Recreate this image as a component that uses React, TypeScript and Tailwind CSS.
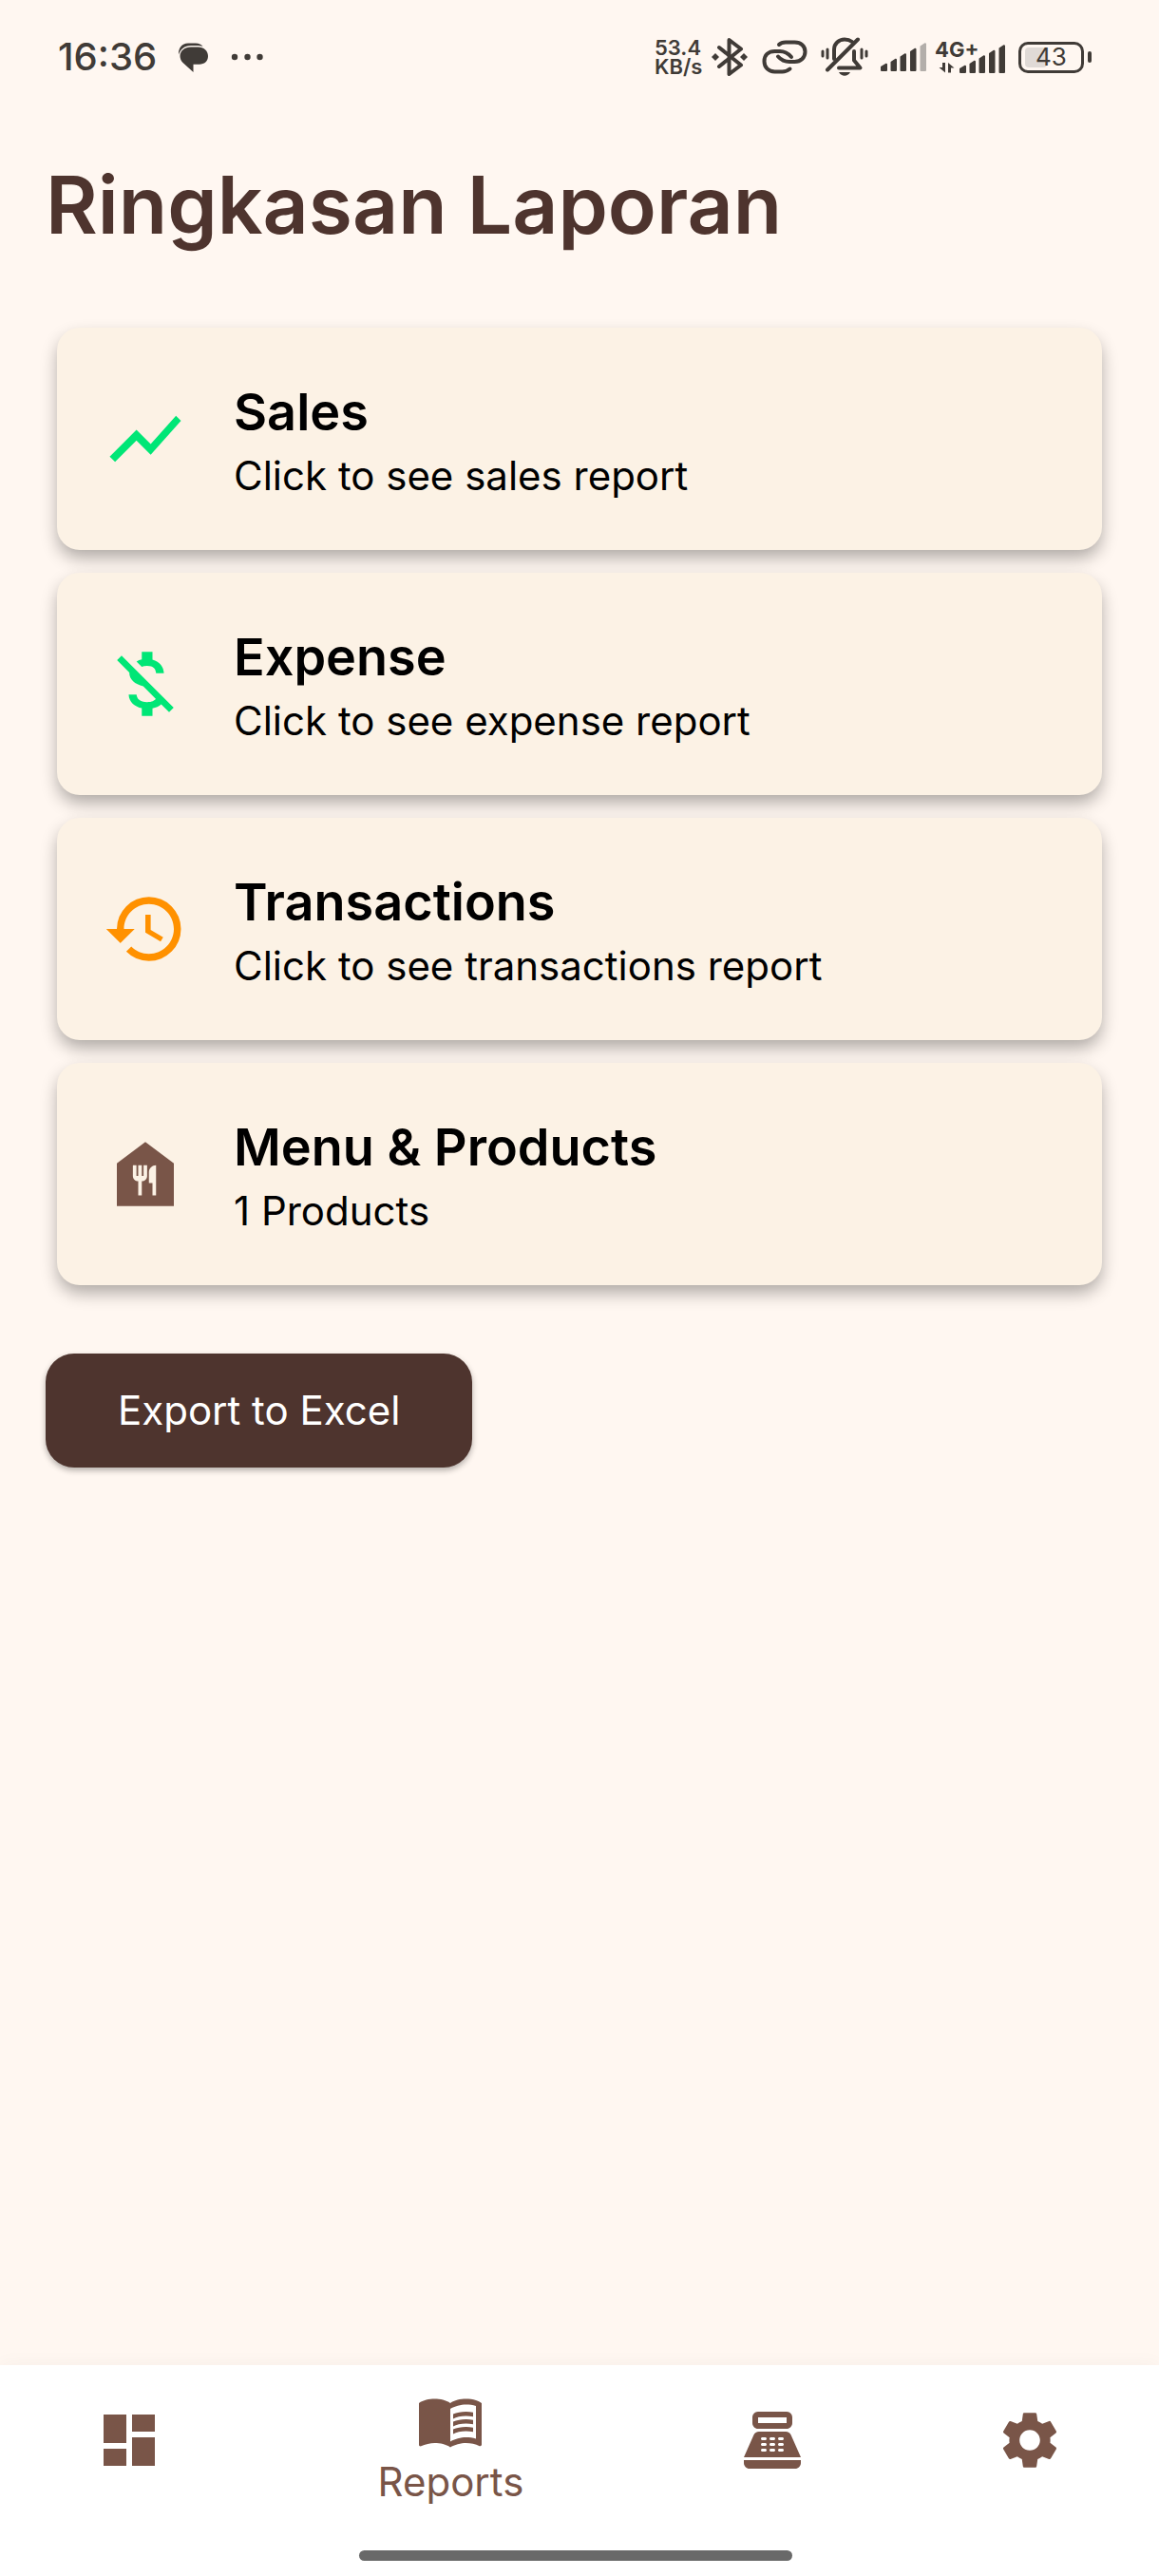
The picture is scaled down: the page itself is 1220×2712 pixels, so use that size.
import type { ReactNode } from 'react';
import {
  MdShowChart,
  MdMoneyOff,
  MdHistory,
  MdFoodBank,
  MdDashboard,
  MdMenuBook,
  MdPointOfSale,
  MdSettings,
} from 'react-icons/md';

const INK = '#403b37';

function SignalBars({ dimLast }: { dimLast?: boolean }) {
  return (
    <g fill={INK} stroke={INK} strokeWidth="2" strokeLinejoin="round">
      <path d="M1 29v-3.500l5-2.800V29z" />
      <path d="M11.500 29V20.500l4.500-2.800V29z" />
      <path d="M21.500 29V15l4.500-2.800V29z" />
      <path d="M32 29V9.500l4.500-2.800V29z" />
      <path
        d="M42.500 29V4l4.500-2.800V29z"
        fill={dimLast ? '#b3aeaa' : INK}
        stroke={dimLast ? '#b3aeaa' : INK}
      />
    </g>
  );
}

function StatusBar() {
  return (
    <header className="flex h-[120px] items-center justify-between pl-[61px] pr-[71px] text-[#403b37]">
      <div className="flex items-center">
        <time className="w-[104px] text-[40px] leading-[48px] font-medium">16:36</time>
        <svg className="ml-[22px]" width="33" height="33" viewBox="0 0 33 33" fill={INK} aria-label="Message">
          <path d="M1 13.500C.500 7 4.500 1.500 11 1.500h8c3.500 0 6 1.500 7.500 3.500-2-.800-4-1-6.500-1h-6C7 4 3 8 1 13.500z" />
          <path d="M14 5.500h7.500c6 0 10.500 4 10.500 9.500s-4 8.700-9 8.700h-6.500V32L5.500 22C3.500 20 2.500 17.500 2.500 15c0-5.500 5-9.500 11.500-9.500z" />
        </svg>
        <svg className="ml-[22px]" width="36" height="8" viewBox="0 0 36 8" fill={INK} aria-label="More">
          <circle cx="5" cy="4" r="3.200" />
          <circle cx="18.500" cy="4" r="3.200" />
          <circle cx="31.500" cy="4" r="3.200" />
        </svg>
      </div>
      <div className="flex items-center">
        <p className="w-[50px] text-[22px] leading-[20px] font-semibold">
          53.4
          <br />
          KB/s
        </p>
        <svg className="ml-[9px]" width="40" height="42" viewBox="0 0 40 42" fill="none" stroke={INK} strokeWidth="4" strokeLinejoin="round" strokeLinecap="round" aria-label="Bluetooth">
          <path d="M9 11l23 18.500-12.500 9.500V3L32 12.500 9 31" />
          <path d="M5 17l4 4-4 4-4-4zM35 17l4 4-4 4-4-4z" fill={INK} stroke="none" />
        </svg>
        <svg className="ml-[14px]" width="48" height="36" viewBox="0 0 48 36" fill="none" stroke={INK} strokeWidth="4" strokeLinecap="round" aria-label="Link">
          <path d="M18 5C20 3 22 2.500 25 2.500h9.500c6.500 0 11 4 11 10S41 23 34.500 23H29c-5 0-8.500-1.500-12-5.500" />
          <path d="M29.500 30.500c-2.500 2-4.500 3-8 3H13.500c-6.500 0-11-4.500-11-11s4.500-10.500 11-10.500H19c5 0 8.500 2 12 6" />
        </svg>
        <svg className="ml-[14px]" width="50" height="42" viewBox="0 0 50 42" fill="none" stroke={INK} strokeWidth="4" strokeLinecap="round" strokeLinejoin="round" aria-label="Silent">
          <path d="M14 23V13c0-6 5-10.500 11-10.500 3.500 0 6 1 8 2.500" />
          <path d="M7 34.500L39 2.500" />
          <path d="M35 15v9.500l6.500 8H19" />
          <path d="M19 37h12c-1.500 2.500-3.500 3.800-6 3.800s-4.500-1.300-6-3.800z" fill={INK} stroke="none" />
          <path d="M2 15v5M7 13v9M43 13v9M48 15v5" strokeWidth="3" />
        </svg>
        <svg className="ml-[13px]" width="49" height="30" viewBox="0 0 49 30" aria-label="Signal">
          <SignalBars dimLast />
        </svg>
        <div className="relative ml-2 h-[34px] w-[75px]">
          <svg className="absolute right-0 bottom-0" width="71" height="30" viewBox="0 0 71 30" aria-label="Mobile data signal">
            <path d="M7 19v10.500L.500 24H4v-5zM10 29.500V19l6.500 5.500H13v5z" fill={INK} />
            <g transform="translate(22 0)">
              <SignalBars />
            </g>
          </svg>
          <span className="absolute top-0 left-0 text-[22px] leading-[18px] font-bold">4G+</span>
        </div>
        <div className="ml-[13px] flex items-center gap-1" role="img" aria-label="Battery 43 percent">
          <div className="relative flex h-[33px] w-[69px] items-center justify-center rounded-[10px] border-[3px] border-[#403b37] text-[26px] leading-[28px]">
            <span className="absolute top-[3px] left-[4px] h-[21px] w-[23px] rounded-[4px] bg-[#e0dad6]" />
            <span className="relative">43</span>
          </div>
          <span className="h-[12px] w-[4px] rounded-sm bg-[#403b37]" />
        </div>
      </div>
    </header>
  );
}

function ReportCard({ icon, title, text }: { icon: ReactNode; title: string; text: string }) {
  return (
    <button
      type="button"
      className="flex w-full items-center gap-12 rounded-[24px] bg-[#fcf2e5] px-12 py-[50px] text-left shadow-[0_9px_18px_-1px_rgba(0,0,0,0.32)]"
    >
      {icon}
      <span className="flex flex-col text-black">
        <span className="text-[54px] leading-[78px] font-semibold">{title}</span>
        <span className="text-[42px] leading-[56px]">{text}</span>
      </span>
    </button>
  );
}

export default function App() {
  return (
    <div className="flex min-h-screen flex-col bg-[#fff7f1] font-['Inter','Noto_Sans',sans-serif]">
      <StatusBar />
      <main className="flex flex-1 flex-col items-start px-12 pt-[39px]">
        <h1 className="text-[84px] leading-[114px] font-semibold text-[#4e342e]">Ringkasan Laporan</h1>
        <section className="mt-[60px] flex w-full flex-col gap-6 p-3">
          <ReportCard icon={<MdShowChart size={90} color="#00e676" />} title="Sales" text="Click to see sales report" />
          <ReportCard icon={<MdMoneyOff size={90} color="#00e676" />} title="Expense" text="Click to see expense report" />
          <ReportCard icon={<MdHistory size={90} color="#ff9100" />} title="Transactions" text="Click to see transactions report" />
          <ReportCard icon={<MdFoodBank size={90} color="#795548" />} title="Menu & Products" text="1 Products" />
        </section>
        <button
          type="button"
          className="mt-[60px] h-[120px] rounded-[30px] bg-[#4e342e] px-[76px] text-[42px] leading-[60px] text-white shadow-[0_3px_6px_rgba(0,0,0,0.3)]"
        >
          Export to Excel
        </button>
      </main>
      <footer className="bg-white text-[#795548] shadow-[0_0_20px_rgba(0,0,0,0.04)]">
        <nav className="flex h-[158px] items-center">
          <button type="button" aria-label="Dashboard" className="flex flex-[2] justify-center">
            <MdDashboard size={72} />
          </button>
          <button type="button" aria-current="page" className="flex flex-[3] flex-col items-center pt-4 text-[42px] leading-[58px]">
            <MdMenuBook size={72} />
            Reports
          </button>
          <button type="button" aria-label="Cashier" className="flex flex-[2] justify-center">
            <MdPointOfSale size={72} />
          </button>
          <button type="button" aria-label="Settings" className="flex flex-[2] justify-center">
            <MdSettings size={72} />
          </button>
        </nav>
        <div className="flex h-16 items-end justify-center pr-2 pb-4">
          <div className="h-[11px] w-[456px] rounded-full bg-[#696969]" />
        </div>
      </footer>
    </div>
  );
}
